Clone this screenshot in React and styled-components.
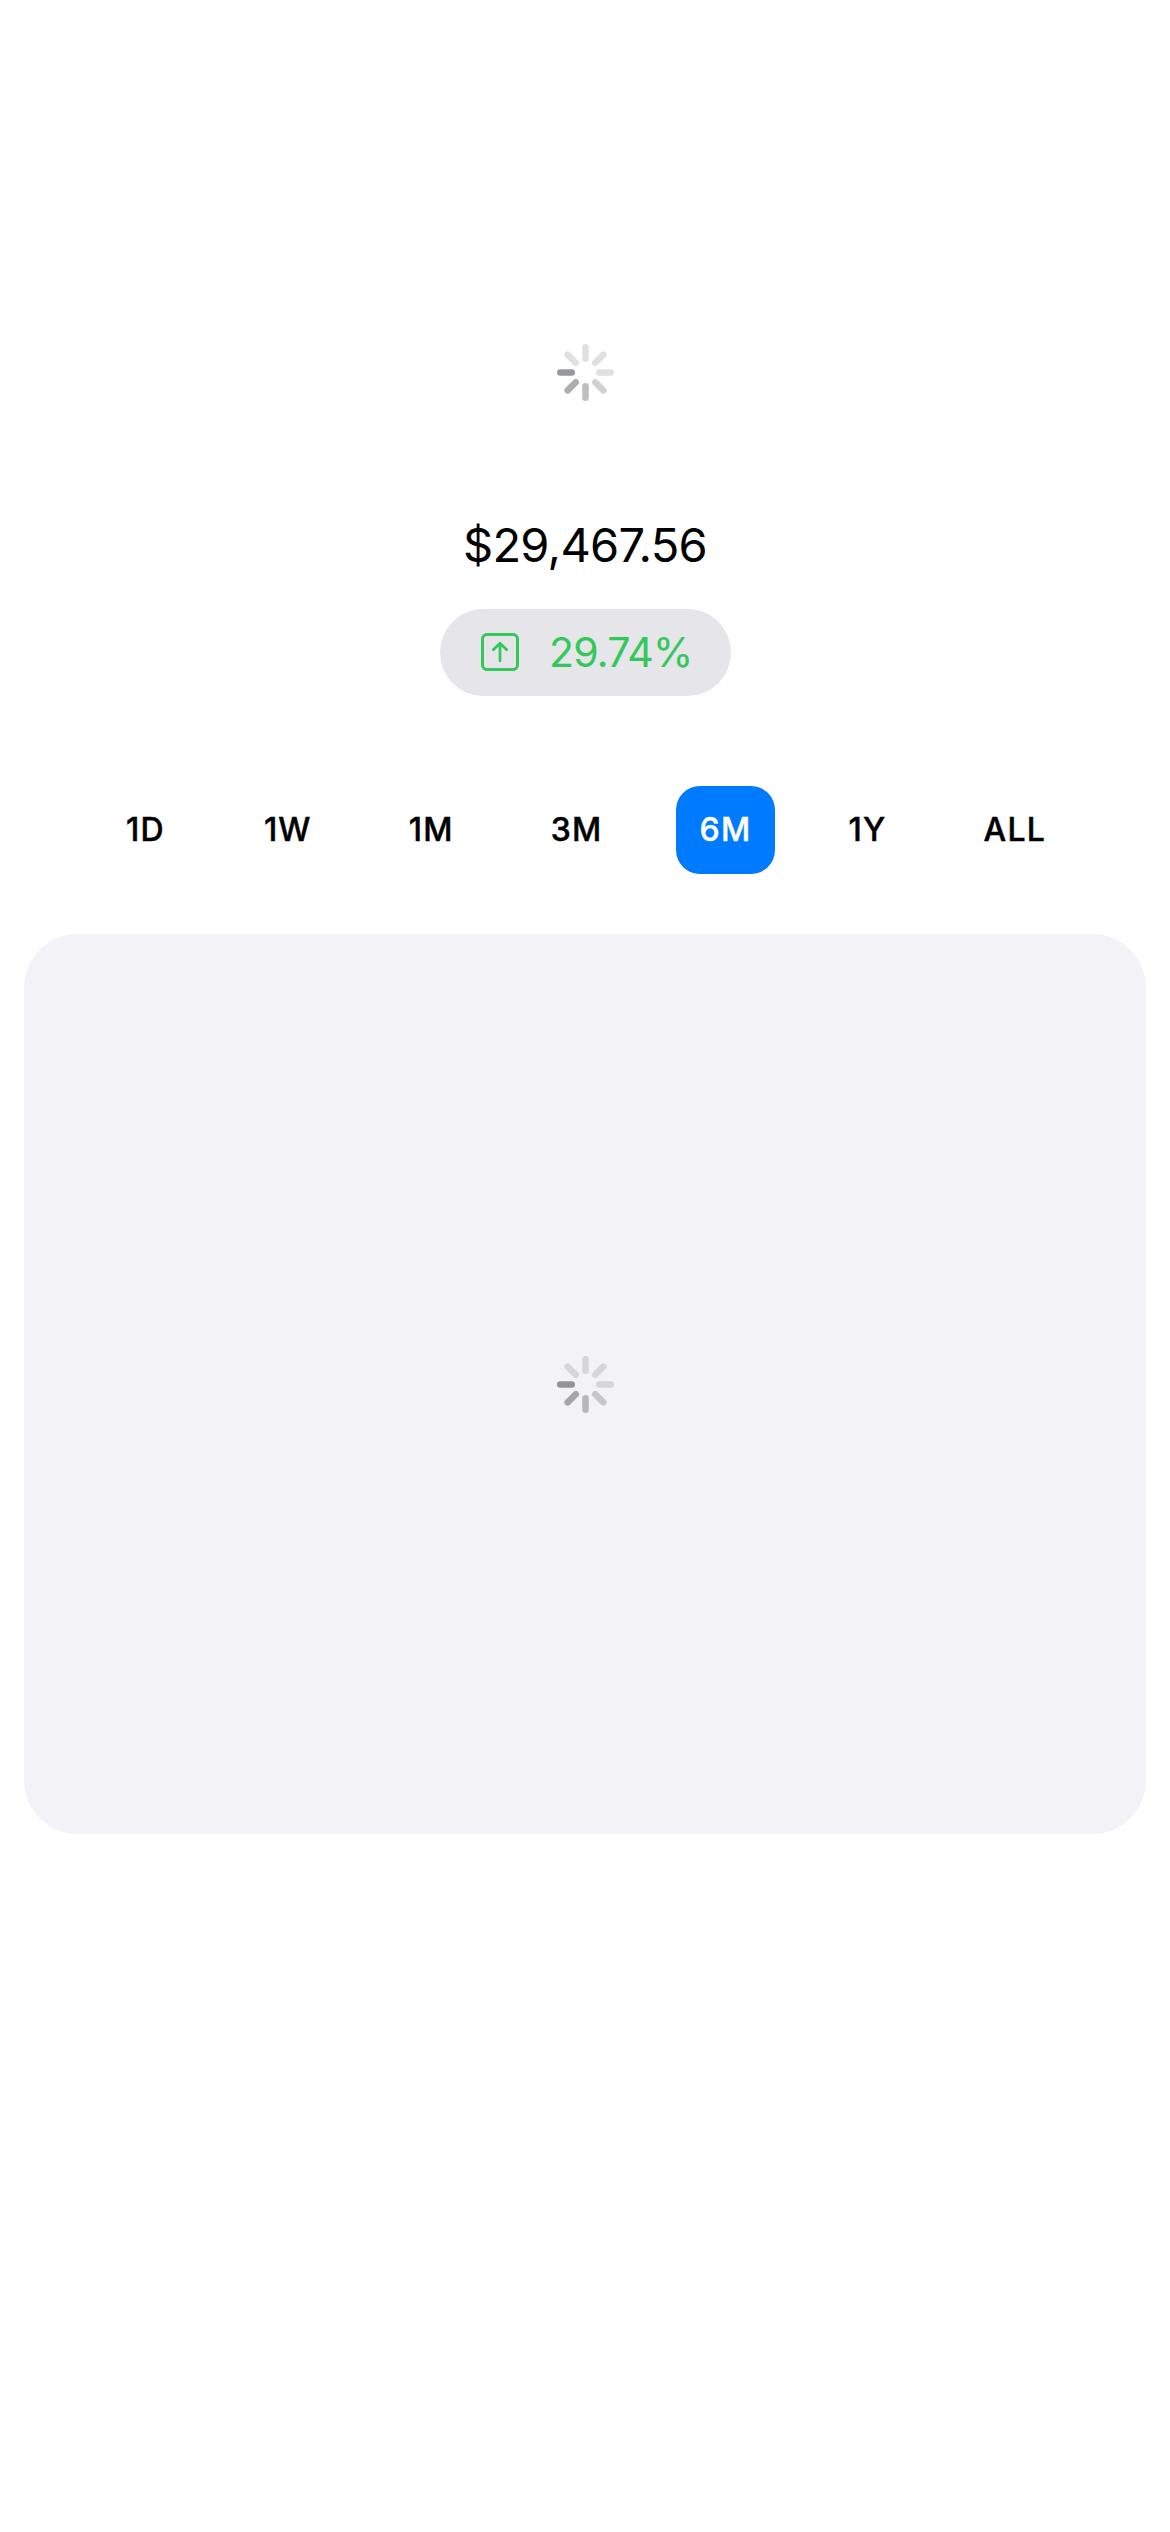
import React from "react";
import styled, { createGlobalStyle } from "styled-components";

const GlobalStyle = createGlobalStyle`
  *, *::before, *::after { box-sizing: border-box; }
  body {
    margin: 0;
    background: #fff;
    color: #000;
    font-family: Inter, "Liberation Sans", sans-serif;
  }
`;

const Screen = styled.main`
  display: flex;
  flex-direction: column;
  align-items: center;
  width: 1170px;
  height: 2532px;
  padding-top: 343px;
  overflow: hidden;
`;

const SpinnerSvg = styled.svg`
  display: block;
  width: 59px;
  height: 59px;
  margin-left: 1px;
  flex: none;
`;

const Price = styled.div`
  margin-top: 114px;
  height: 58px;
  line-height: 58px;
  font-size: 47px;
  font-weight: 400;
  letter-spacing: -0.7px;
  white-space: nowrap;
`;

const Change = styled.div`
  display: flex;
  align-items: center;
  width: 291px;
  height: 87px;
  margin-top: 35px;
  margin-left: 1px;
  padding: 0 0 1px 41px;
  gap: 30px;
  border-radius: 44px;
  background: #e5e5ea;
  color: #34c759;
`;

const ChangeIcon = styled.svg`
  width: 38px;
  height: 38px;
  flex: none;
`;

const ChangeText = styled.span`
  font-size: 41px;
  line-height: 50px;
  letter-spacing: -0.8px;
  white-space: nowrap;
`;

const Ranges = styled.nav`
  display: flex;
  justify-content: space-between;
  width: 970px;
  margin-top: 90px;
`;

const Range = styled.button`
  display: flex;
  align-items: center;
  justify-content: center;
  height: 88px;
  padding: 0 ${(p) => p.$inset || 24}px;
  border: 0;
  border-radius: 24px;
  background: ${(p) => (p.$active ? "#007aff" : "transparent")};
  color: ${(p) => (p.$active ? "#fff" : "#000")};
  font: 500 32px/40px Inter, "Liberation Sans", sans-serif;
  letter-spacing: 1.2px;
  -webkit-text-stroke: 0.45px currentColor;
`;

const Chart = styled.section`
  display: flex;
  align-items: center;
  justify-content: center;
  width: 1122px;
  height: 900px;
  margin-top: 60px;
  border-radius: 54px;
  background: #f2f2f7;
`;

const OPACITY = [0.16, 0.16, 0.16, 0.24, 0.33, 0.42, 0.52, 0.16];

function Spinner() {
  return (
    <SpinnerSvg viewBox="-29.5 -29.5 59 59">
      {OPACITY.map((opacity, i) => (
        <rect
          key={i}
          x="-3.25"
          y="-28.5"
          width="6.5"
          height="18"
          rx="3.25"
          fill="#3c3c43"
          fillOpacity={opacity}
          transform={`rotate(${i * 45})`}
        />
      ))}
    </SpinnerSvg>
  );
}

const RANGES = [
  { label: "1D", inset: 26 },
  { label: "1W" },
  { label: "1M" },
  { label: "3M" },
  { label: "6M" },
  { label: "1Y" },
  { label: "ALL" },
];

export default function App() {
  return (
    <>
      <GlobalStyle />
      <Screen>
        <Spinner />
        <Price>$29,467.56</Price>
        <Change>
          <ChangeIcon viewBox="0 0 38 38" fill="none" stroke="currentColor" strokeWidth="3" strokeLinecap="round" strokeLinejoin="round">
            <rect x="1.5" y="1.5" width="35" height="35" rx="4.5" />
            <path d="M19 28V10.5M12.3 16.7L19 10.2L25.7 16.7" strokeWidth="2.7" />
          </ChangeIcon>
          <ChangeText>29.74%</ChangeText>
        </Change>
        <Ranges>
          {RANGES.map(({ label, inset }) => (
            <Range key={label} $active={label === "6M"} $inset={inset}>
              {label}
            </Range>
          ))}
        </Ranges>
        <Chart>
          <Spinner />
        </Chart>
      </Screen>
    </>
  );
}
